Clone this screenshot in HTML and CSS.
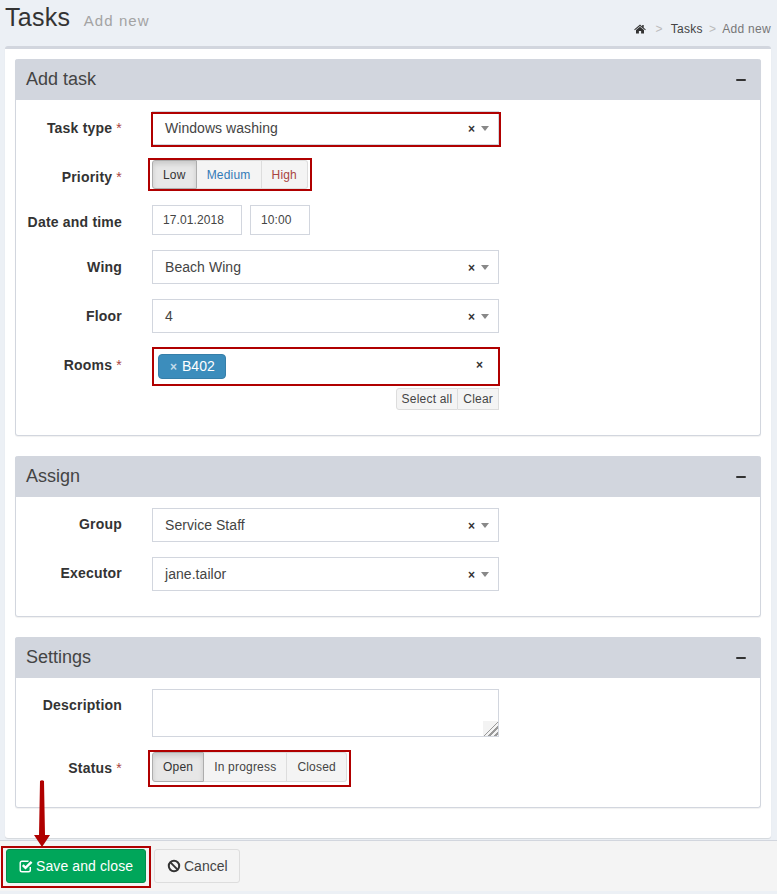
FILE: index.html
```html
<!DOCTYPE html>
<html lang="en">
<head>
<meta charset="utf-8">
<title>Tasks - Add new</title>
<link rel="stylesheet" href="styles.css">
</head>
<body>
<header class="page-head">
  <h1 class="title">Tasks <small class="subtitle">Add new</small></h1>
  <nav class="crumbs">
    <svg class="home" viewBox="0 0 12 10"><path d="M6 0.6 L8.2 2.5 V1 H9.7 V3.8 L11.8 5.6 L11.2 6.3 L6 1.9 L0.8 6.3 L0.2 5.6 Z M2 6.1 L6 2.8 L10 6.1 V9.6 H7.1 V7 H4.9 V9.6 H2 Z"/></svg>
    <span class="sep first">&gt;</span><span class="crumb">Tasks</span><span class="sep">&gt;</span><span class="crumb current">Add new</span>
  </nav>
</header>
<main class="box">
  <section class="panel first-panel">
    <div class="panel-head"><h2>Add task</h2><span class="minus"></span></div>
    <div class="panel-body body-task">
      <div class="row row-type"><label>Task type <i>*</i></label>
        <div class="select mark-type"><span>Windows washing</span><b class="x">×</b><b class="caret"></b></div></div>
      <div class="row row-priority"><label>Priority <i>*</i></label>
        <div class="btns marked-group"><button class="on">Low</button><button class="blue">Medium</button><button class="red">High</button></div></div>
      <div class="row row-date"><label>Date and time</label>
        <div class="inline"><div class="field date">17.01.2018</div><div class="field time">10:00</div></div></div>
      <div class="row"><label>Wing</label>
        <div class="select"><span>Beach Wing</span><b class="x">×</b><b class="caret"></b></div></div>
      <div class="row"><label>Floor</label>
        <div class="select"><span>4</span><b class="x">×</b><b class="caret"></b></div></div>
      <div class="row row-rooms"><label>Rooms <i>*</i></label>
        <div class="rooms-col">
          <div class="multi mark-rooms"><span class="tag"><b>×</b>B402</span><b class="x">×</b></div>
          <div class="mini-btns"><button>Select all</button><button>Clear</button></div>
        </div></div>
    </div>
  </section>
  <section class="panel">
    <div class="panel-head"><h2>Assign</h2><span class="minus"></span></div>
    <div class="panel-body body-assign">
      <div class="row row-tight"><label>Group</label>
        <div class="select"><span>Service Staff</span><b class="x">×</b><b class="caret"></b></div></div>
      <div class="row row-tight"><label>Executor</label>
        <div class="select"><span>jane.tailor</span><b class="x">×</b><b class="caret"></b></div></div>
    </div>
  </section>
  <section class="panel">
    <div class="panel-head"><h2>Settings</h2><span class="minus"></span></div>
    <div class="panel-body body-settings">
      <div class="row row-desc row-tight"><label>Description</label>
        <textarea class="area"></textarea></div>
      <div class="row row-status row-tight"><label>Status <i>*</i></label>
        <div class="btns marked-group status-group"><button class="on">Open</button><button>In progress</button><button>Closed</button></div></div>
    </div>
  </section>
</main>
<footer class="actions">
  <div class="save-mark"><button class="save"><svg viewBox="0 0 14 13"><path d="M9.5 1.2 H3 A1.8 1.8 0 0 0 1.2 3 V10 A1.8 1.8 0 0 0 3 11.8 H9.5 A1.8 1.8 0 0 0 11.3 10 V7" fill="none" stroke="#fff" stroke-width="1.4"/><path d="M3.8 5.2 L6.5 7.9 L12.6 1.8" fill="none" stroke="#fff" stroke-width="2.4"/></svg>Save and close</button></div>
  <button class="cancel"><svg viewBox="0 0 14 14"><circle cx="7" cy="7" r="5.2" fill="none" stroke="#333" stroke-width="2"/><path d="M3.4 3.4 L10.6 10.6" stroke="#333" stroke-width="2"/></svg>Cancel</button>
</footer>
<svg class="arrow" viewBox="0 0 16 67"><path d="M6 1 Q8 -0.5 10 1 L11 55 H16 L8 67 L0 55 H5 Z"/></svg>
</body>
</html>
```
FILE: styles.css
```css
* { box-sizing: border-box; }
html, body { margin: 0; height: 894px; overflow: hidden; }
body { background: #ecf0f5; font-family: "Liberation Sans", Arial, sans-serif; font-size: 14px; color: #333; position: relative; }
button { font-family: inherit; }

.page-head { height: 46px; padding: 0 6px 0 5px; position: relative; display: flex; justify-content: space-between; }
.title { margin: 3px 0 0; font-size: 25px; line-height: 28px; font-weight: 400; color: #333; letter-spacing: 0.3px; }
.subtitle { font-size: 15px; font-weight: 400; color: #a3a3a3; margin-left: 6px; letter-spacing: 1.1px; }
.crumbs { display: flex; align-items: center; height: 18px; margin-top: 20px; font-size: 12px; letter-spacing: 0.3px; }
.home { width: 12px; height: 10px; fill: #333; margin-right: 9px; }
.sep { color: #bbb; margin: 0 6px 0 0; }
.sep.first { margin-right: 8px; }
.crumb { color: #444; margin-right: 6px; }
.crumb.current { color: #777; margin-right: 0; }

.box { margin: 0 6px 0 5px; height: 792px; background: #fff; border-top: 3px solid #d2d6de; border-radius: 3px; padding: 10px 10px 0; box-shadow: 0 1px 1px rgba(0,0,0,.1); }
.panel { border: 1px solid #d2d6de; border-top: 0; border-radius: 3px; margin-bottom: 20px; box-shadow: 0 1px 1px rgba(0,0,0,.06); }
.panel-head { height: 41px; margin: 0 -1px; background: #d2d6de; border-radius: 3px 3px 0 0; padding: 0 15px 0 11px; display: flex; align-items: center; justify-content: space-between; }
.panel-head h2 { margin: 0; font-size: 18px; font-weight: 400; color: #444; }
.minus { width: 10px; height: 2px; background: #333; border-radius: 1px; }

.panel-body { padding: 11px 0 0; }
.body-task { height: 335px; }
.body-assign { height: 119px; }
.body-settings { height: 129px; }
.row { display: flex; align-items: flex-start; margin-bottom: 15px; }
.row label { width: 106px; margin-right: 30px; text-align: right; font-weight: 700; line-height: 20px; padding-top: 7px; flex: none; letter-spacing: 0.2px; }
.row label i { color: #a94442; font-style: normal; font-weight: 400; }
.row.row-tight label { padding-top: 6px; }

.select { width: 347px; height: 34px; border: 1px solid #d2d6de; display: flex; align-items: center; padding: 0 9px 0 12px; color: #444; letter-spacing: 0.05px; }
.select span { flex: 1; }
.x { font-size: 12px; font-weight: 700; color: #333; line-height: 1; margin-top: 2px; }
.caret { width: 0; height: 0; margin: 0 0 0 6px; border: 4.5px solid transparent; border-top: 5px solid #888; border-bottom: 0; }
.mark-type, .mark-rooms { position: relative; }
.mark-type::after, .mark-rooms::after { content: ""; position: absolute; pointer-events: none; }
.mark-type::after { left: -2px; right: -3px; top: 0; bottom: -3px; border: 2.5px solid #b00000; }
.mark-rooms::after { left: -1px; right: -2px; top: -2px; bottom: -2px; border: 2px solid #b00000; }
.marked-group { outline: 2px solid #b00000; padding: 0 2px; margin-left: -2px; }

.row-priority { margin-bottom: 16px; }
.btns { display: flex; height: 29px; }
.btns button { height: 29px; border: 1px solid #ddd; border-left-width: 0; background: #f4f4f4; font-size: 12px; color: #444; padding: 0 10px; letter-spacing: 0.2px; }
.btns button:first-child { border-left-width: 1px; border-radius: 3px 0 0 3px; }
.btns button:last-child { border-radius: 0 3px 3px 0; }
.btns button.on { background: #e7e7e7; border-color: #adadad; color: #333; box-shadow: inset 0 3px 5px rgba(0,0,0,.125); }
.btns .blue { color: #337ab7; }
.btns .red { color: #a94442; }
.status-group { height: 33px; align-items: flex-start; }
.status-group button { height: 30px; }

.inline { display: flex; gap: 8px; }
.field { height: 30px; border: 1px solid #d2d6de; font-size: 12px; line-height: 28px; padding: 0 10px; color: #444; letter-spacing: 0.1px; }
.date { width: 90px; }
.time { width: 60px; }

.row-rooms { margin-bottom: 0; }
.rooms-col { width: 347px; }
.multi { height: 37px; border: 1px solid #d2d6de; display: flex; align-items: center; justify-content: space-between; padding: 0 15px 0 5px; }
.multi .x { margin-top: -3px; }
.tag { background: #3c8dbc; border: 1px solid #367fa9; border-radius: 4px; color: #fff; height: 25px; line-height: 23px; padding: 0 10px 0 11px; display: flex; margin-top: -1px; }
.tag b { color: rgba(255,255,255,.7); font-size: 12px; margin-right: 5px; line-height: 25px; }
.mini-btns { display: flex; justify-content: flex-end; margin-top: 3px; }
.mini-btns button { height: 22px; padding: 0 5px; background: #f4f4f4; border: 1px solid #ddd; border-left-width: 0; font-size: 12px; color: #444; letter-spacing: 0.2px; }
.mini-btns button:first-child { border-left-width: 1px; border-radius: 3px 0 0 3px; }

.row-desc { margin-bottom: 15px; }
.area { width: 347px; height: 48px; border: 1px solid #d2d6de; display: block; margin: 0; padding: 6px 12px; resize: none;
  background:
    linear-gradient(135deg, #f3f3f3 0 52%, transparent 52%) right bottom / 15px 15px no-repeat,
    repeating-linear-gradient(135deg, #f3f3f3 0 2px, #999 2px 4px) right bottom / 15px 15px no-repeat,
    #fff; }
.row-status { margin-bottom: 0; }

.actions { position: absolute; left: 0; right: 0; top: 840px; height: 51px; background: #f4f4f4; border-top: 1px solid #d2d6de; padding: 7px 3px 0; display: flex; gap: 5px; align-items: flex-start; }
.actions button { height: 34px; border-radius: 3px; font-size: 14px; display: flex; align-items: center; gap: 3px; }
.save-mark { padding: 1px 3px 3px; outline: 2px solid #b00000; }
.save { width: 140px; background: #00a65a; border: 1px solid #008d4c; color: #fff; padding: 0 0 0 12px; letter-spacing: 0.1px; }
.save svg { width: 14px; height: 13px; }
.cancel { width: 86px; margin-top: 1px; background: #f4f4f4; border: 1px solid #ddd; color: #444; padding: 0 0 0 12px; }
.cancel svg { width: 14px; height: 14px; }
.arrow { position: absolute; left: 34px; top: 780px; width: 16px; height: 67px; fill: #b00000; }
```
